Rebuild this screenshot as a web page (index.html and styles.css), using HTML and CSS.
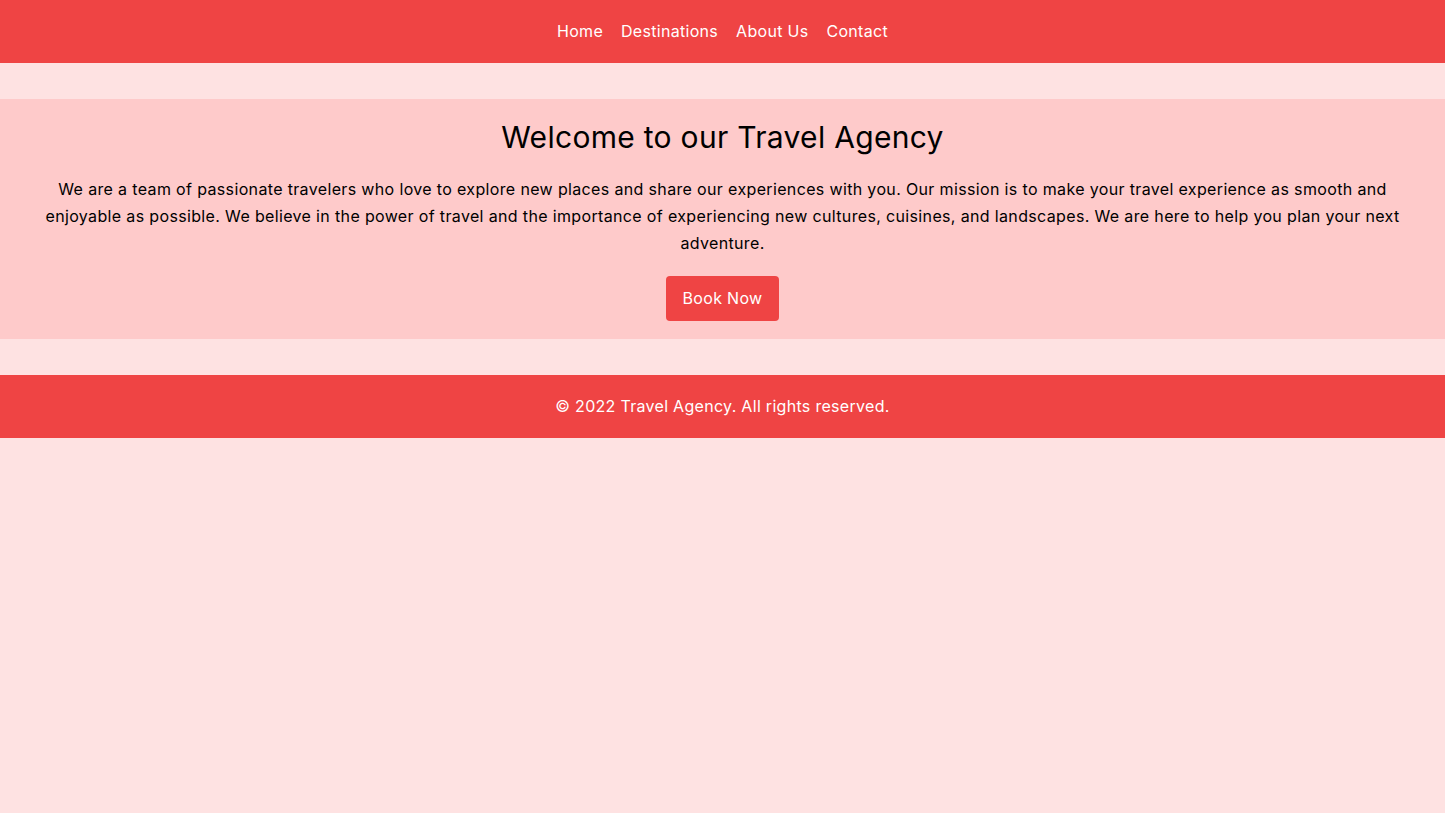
FILE: index.html
```html
<!DOCTYPE html>
<html>

<head>
    <title>Travel Agency</title>
    <link rel="stylesheet" href="styles.css">
</head>

<body>
    <header class="topbar">
        <nav class="nav">
            <a href="#">Home</a>
            <a href="#">Destinations</a>
            <a href="#">About Us</a>
            <a href="#">Contact</a>
        </nav>
    </header>

    <section class="hero">
        <h1>Welcome to our Travel Agency</h1>
        <p>We are a team of passionate travelers who love to explore new places and share our experiences with you. Our mission is to make your travel experience as smooth and enjoyable as possible. We believe in the power of travel and the importance of experiencing new cultures, cuisines, and landscapes. We are here to help you plan your next adventure.</p>
        <a href="#" class="book-btn">Book Now</a>
    </section>

    <footer class="footer">
        &copy; 2022 Travel Agency. All rights reserved.
    </footer>
</body>

</html>
```

FILE: styles.css
```css
body {
    font-family: Inter, "Liberation Sans", sans-serif;
    letter-spacing: 0.3px;
    margin: 0;
    padding: 0;
    background-color: #fee2e2;
    color: #000;
    min-height: 813px;
}

.topbar {
    background-color: #ef4444;
    height: 63px;
    box-sizing: border-box;
    padding-bottom: 2px;
    display: flex;
    align-items: center;
    justify-content: center;
}

.nav {
    display: flex;
    gap: 18px;
}

.nav a {
    color: #fff;
    text-decoration: none;
    font-size: 16px;
}

.hero {
    background-color: #fecaca;
    margin: 36px 0;
    padding: 20px 40px 18px;
    text-align: center;
}

.hero h1 {
    font-size: 30px;
    font-weight: normal;
    line-height: 36px;
    margin: 0 0 21px;
}

.hero p {
    font-size: 16px;
    line-height: 27px;
    letter-spacing: 0.35px;
    margin: 0 0 19px;
}

.book-btn {
    display: inline-block;
    background-color: #ef4444;
    color: #fff;
    text-decoration: none;
    font-size: 16px;
    line-height: 25px;
    padding: 10px 17px;
    border-radius: 4px;
}

.footer {
    background-color: #ef4444;
    color: #fff;
    height: 63px;
    box-sizing: border-box;
    padding-bottom: 2px;
    display: flex;
    align-items: center;
    justify-content: center;
    font-size: 16px;
}
```
